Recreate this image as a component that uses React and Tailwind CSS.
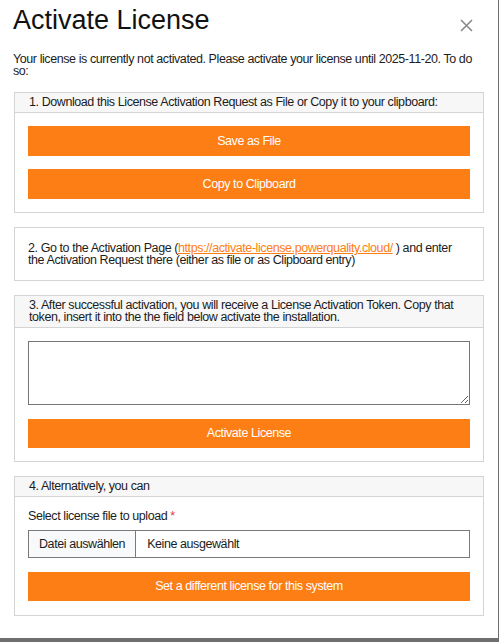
import React from "react";

function Section({ title, children, bodyClass = "" }) {
  return (
    <div className="mx-px border border-[#d4d4d4] bg-white">
      {title && (
        <div className="bg-[#f7f7f7] border-b border-[#d4d4d4] pl-[14px] pr-3 pt-[3px] pb-[4px] leading-[12px]">
          {title}
        </div>
      )}
      <div className={"p-[13px] " + bodyClass}>{children}</div>
    </div>
  );
}

function OrangeButton({ children, h = "h-[30px]" }) {
  return (
    <button className={"w-full bg-[#fd7e14] text-white text-[12.5px] tracking-[-0.42px] " + h}>
      {children}
    </button>
  );
}

export default function App() {
  return (
    <div className="h-[642px] w-[499px] bg-[#6f6f6f] overflow-hidden">
      <div
        className="w-[498px] h-[638px] bg-white px-[13px] text-[12.5px] tracking-[-0.42px] text-[#1c1c1c]"
        style={{ fontFamily: '"Liberation Sans", Arial, sans-serif' }}
      >
        <div className="flex items-start justify-between pt-[5px]">
          <h1 className="text-[27px] leading-[31px] tracking-normal text-[#111]">Activate License</h1>
          <svg width="13" height="13" viewBox="0 0 13 13" className="mt-[14px] mr-[12px]">
            <path d="M1 1 L12 12 M12 1 L1 12" stroke="#8a8a8a" strokeWidth="1.6" />
          </svg>
        </div>

        <p className="mt-[17px] leading-[12px]">
          Your license is currently not activated. Please activate your license until 2025-11-20. To do so:
        </p>

        <div className="mt-[15px] flex flex-col gap-[14px]">
          <Section title="1. Download this License Activation Request as File or Copy it to your clipboard:">
            <div className="flex flex-col gap-[13px]">
              <OrangeButton>Save as File</OrangeButton>
              <OrangeButton>Copy to Clipboard</OrangeButton>
            </div>
          </Section>

          <Section bodyClass="pt-[14px] pb-[14px] leading-[12px]">
            2. Go to the Activation Page (
            <a className="text-[#fd7e14] underline" href="#">
              https://activate-license.powerquality.cloud/
            </a>{" "}
            ) and enter the Activation Request there (either as file or as Clipboard entry)
          </Section>

          <Section title="3. After successful activation, you will receive a License Activation Token. Copy that token, insert it into the the field below activate the installation.">
            <textarea className="block w-full h-[64px] border border-[#767676] bg-white" />
            <div className="mt-[14px]">
              <OrangeButton h="h-[29px]">Activate License</OrangeButton>
            </div>
          </Section>

          <Section title="4. Alternatively, you can" bodyClass="pb-[14px]">
            <div className="leading-[12px]">
              Select license file to upload <span className="text-[#dc3545]">*</span>
            </div>
            <div className="mt-[8px] flex h-[28px] border border-[#7a7a7a]">
              <div className="flex items-center bg-[#f8f9fa] border-r border-[#7a7a7a] px-[10px]">
                Datei auswählen
              </div>
              <div className="flex items-center pl-[11px]">Keine ausgewählt</div>
            </div>
            <div className="mt-[14px]">
              <OrangeButton h="h-[29px]">Set a different license for this system</OrangeButton>
            </div>
          </Section>
        </div>
      </div>
    </div>
  );
}
